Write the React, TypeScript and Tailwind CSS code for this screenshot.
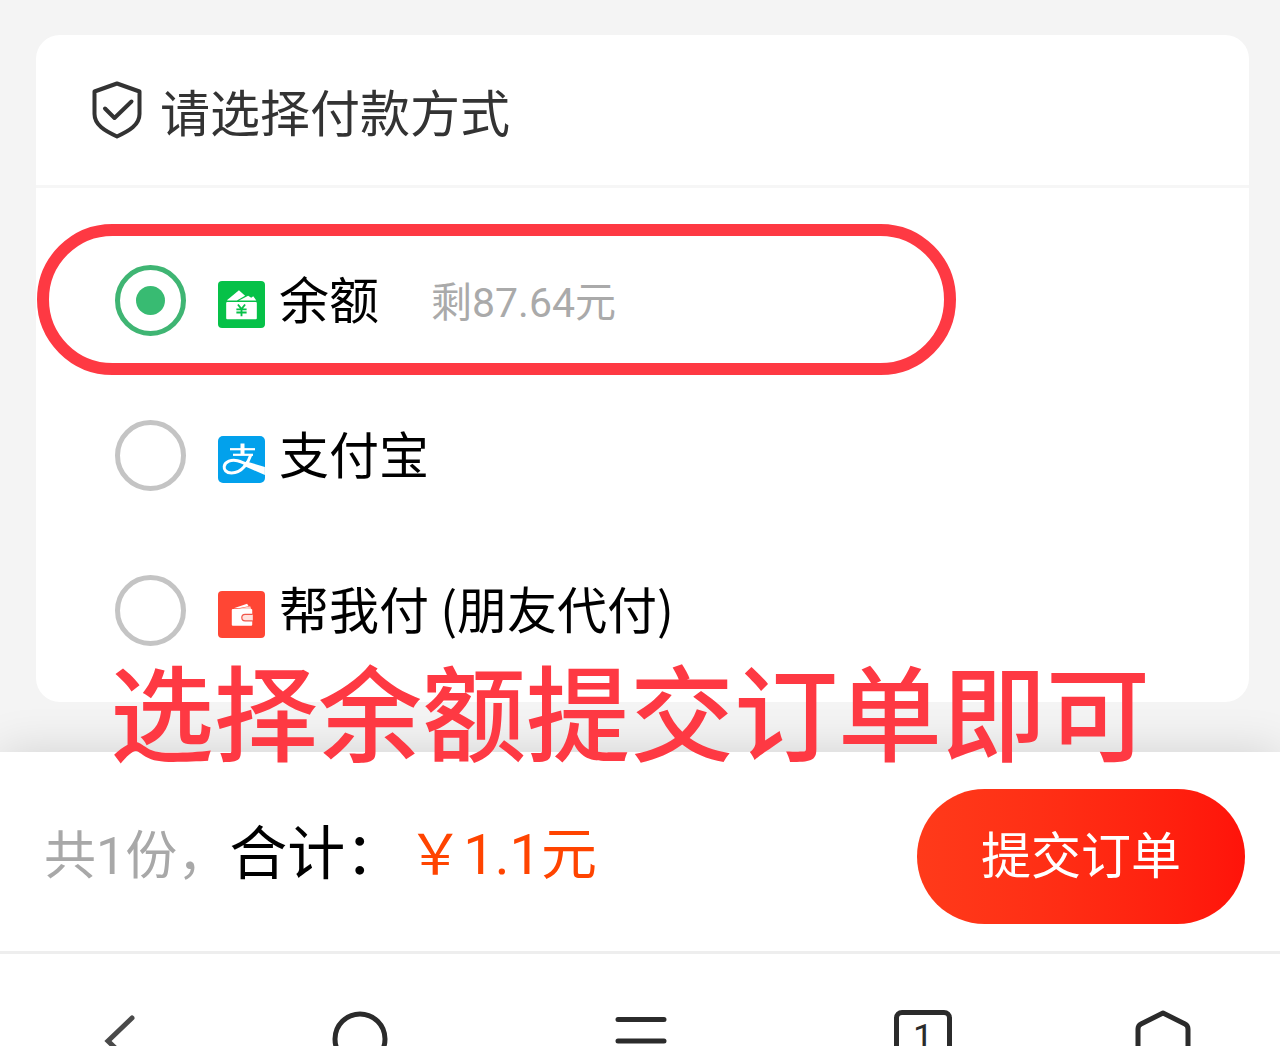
import type { ReactNode } from 'react';

interface PayMethod {
  id: string;
  name: string;
  balance?: string;
  icon: ReactNode;
}

function BalanceIcon() {
  return (
    <svg viewBox="0 0 46 46" className="size-[47px]" aria-hidden="true">
      <rect width="46" height="46" rx="4" fill="#06c148" />
      <path d="M9 18.5 L20.5 9 L26.5 14.5 L18.5 19 H9 Z" fill="#fff" />
      <path d="M20.5 19 L29.5 14.5 L32.5 16.5 L34.5 15 L37.5 19 Z" fill="#fff" />
      <rect x="8" y="20.5" width="30" height="17" rx="1" fill="#fff" />
      <path
        d="M19.5 23 L23 27.5 L26.5 23 M18 27.8 H28 M18 30.8 H28 M23 27.5 V34.5"
        fill="none"
        stroke="#06c148"
        strokeWidth="1.8"
      />
    </svg>
  );
}

function AlipayIcon() {
  return (
    <svg viewBox="0 0 47 47" className="size-[47px]" aria-hidden="true">
      <rect width="47" height="47" rx="5" fill="#02a1ec" />
      <path d="M46.9 31 V39 L33 33 L25 29.5 L28.5 25.5 Z" fill="#fff" />
      <g fill="none" stroke="#fff">
        <path d="M24.5 7.5 V18" strokeWidth="4" />
        <path d="M12 13.2 H37" strokeWidth="2.2" />
        <path d="M15 18.8 H35" strokeWidth="2.2" />
        <path
          d="M33 18.5 C30.5 26 24.5 37 13.5 37 C8 37 5.8 33.5 6.2 30.5 C7 25.5 13.5 23.3 19.5 24.8 C25 26.2 29 28.5 34 31"
          strokeWidth="3"
        />
      </g>
    </svg>
  );
}

function FriendPayIcon() {
  return (
    <svg viewBox="0 0 46 46" className="size-[47px]" aria-hidden="true">
      <rect width="46" height="46" rx="4" fill="#ff4634" />
      <path d="M15.5 17 L28.5 12.5 L30 15 L20 17 Z" fill="#fff" />
      <path d="M19 17.5 L31.5 15 L32.5 17.5 Z" fill="#ffd0ca" />
      <rect x="13.5" y="17.5" width="20" height="16.5" rx="1" fill="#fff" />
      <path
        d="M34 22.8 H26.5 A3.2 3.2 0 0 0 26.5 29.2 H34"
        fill="#ffe1dd"
        stroke="#f0564a"
        strokeWidth="1.2"
      />
    </svg>
  );
}

const METHODS: PayMethod[] = [
  { id: 'balance', name: '余额', balance: '剩87.64元', icon: <BalanceIcon /> },
  { id: 'alipay', name: '支付宝', icon: <AlipayIcon /> },
  { id: 'friend', name: '帮我付 (朋友代付)', icon: <FriendPayIcon /> },
];

function MethodRow({ method, selected }: { method: PayMethod; selected: boolean }) {
  return (
    <div className="relative flex h-[155px] items-center pl-[79px]">
      <input
        type="radio"
        id={method.id}
        name="pay-method"
        defaultChecked={selected}
        className="flex size-[71px] shrink-0 appearance-none items-center justify-center rounded-full border-5 border-[#c4c4c4] before:size-[29px] before:rounded-full checked:border-[#3fb573] checked:before:bg-[#38bb72]"
      />
      <label htmlFor={method.id} className="ml-8 flex items-center text-[50px] leading-[60px] text-black">
        <span className="mt-2">{method.icon}</span>
        <span className="mb-2 ml-3.5">{method.name}</span>
        {method.balance && (
          <span className="mt-1 ml-[52px] font-[Roboto,'Noto_Sans_CJK_SC',sans-serif] text-[41px] text-[#aaaaaa]">
            {method.balance}
          </span>
        )}
      </label>
      {/* Highlight ring around the chosen method */}
      {selected && (
        <div className="pointer-events-none absolute top-px left-px h-[151px] w-[919px] rounded-full border-12 border-[#fe3943]" />
      )}
    </div>
  );
}

export default function App() {
  return (
    <div className="flex h-screen flex-col overflow-hidden bg-[#f4f4f4] font-['Noto_Sans_CJK_SC',sans-serif]">
      <main className="pt-[35px] pr-[31px] pb-[50px] pl-9">
        <section className="rounded-3xl bg-white pb-[14px]">
          <header className="flex h-[153px] items-center gap-[18px] border-b-3 border-[#f6f6f6] pl-14 text-[#333333]">
            <svg viewBox="0 0 50 58" className="h-[58px] w-[50px]" fill="none" stroke="currentColor" aria-hidden="true">
              <path
                d="M25 2.5 L47.5 10.5 V33 C47.5 44 37 50 25 55.5 C13 50 2.5 44 2.5 33 V10.5 Z"
                strokeWidth="4"
                strokeLinejoin="round"
              />
              <path d="M13 27.5 L22.5 37 L39.5 20.5" strokeWidth="4" strokeLinecap="round" strokeLinejoin="round" />
            </svg>
            <h1 className="text-[50px] leading-[72px]">请选择付款方式</h1>
          </header>

          <div className="pt-[35px]">
            {METHODS.map((m, i) => (
              <MethodRow key={m.id} method={m} selected={i === 0} />
            ))}
          </div>
        </section>
      </main>

      {/* Order bar */}
      <div className="relative flex h-[202px] shrink-0 items-center justify-between border-b-3 border-[#eeeeee] bg-white pt-2.5 pr-[35px] pl-11 shadow-[0_0_44px_rgba(0,0,0,0.14)]">
        <p className="flex items-baseline pb-1 font-[Roboto,'Noto_Sans_CJK_SC',sans-serif]">
          <span className="text-[52px] text-[#a8a8a8]">共1份，</span>
          <span className="text-[58px] text-black">合计：</span>
          <span className="ml-1 text-[56px] text-[#ff4400]">￥1.1元</span>
        </p>
        <button
          type="button"
          className="h-[135px] w-[328px] rounded-full bg-linear-to-r from-[#ff3a1a] to-[#ff130a] pb-2 text-[50px] text-white"
        >
          提交订单
        </button>

        {/* Caption across the card edge */}
        <p className="pointer-events-none absolute -top-[95px] left-[110px] text-[104px] leading-[104px] font-medium whitespace-nowrap text-[#fe3943]">
          选择余额提交订单即可
        </p>
      </div>

      {/* Browser toolbar */}
      <nav className="relative grid shrink-0 grid-cols-[238fr_244fr_318fr_246fr_234fr] justify-items-center bg-white pt-14 pb-8 text-[#2b2b2b]">
        <button type="button" aria-label="返回">
          <svg viewBox="0 0 60 60" className="size-[60px]" fill="none" stroke="#4a4a4a" strokeWidth="5" strokeLinecap="round">
            <path d="M43 8 L19 31 L43 54" />
          </svg>
        </button>
        <button type="button" aria-label="主屏幕">
          <svg viewBox="0 0 60 60" className="size-[60px]" fill="none" stroke="currentColor" strokeWidth="5">
            <circle cx="30" cy="29" r="25" />
          </svg>
        </button>
        <button type="button" aria-label="菜单">
          <svg viewBox="0 0 60 60" className="size-[60px]" fill="none" stroke="currentColor" strokeWidth="5" strokeLinecap="round">
            <path d="M7 9.5 H53 M7 31 H53 M7 52.5 H53" />
          </svg>
        </button>
        <button type="button" aria-label="标签页" className="h-[60px] w-[58px]">
          <span className="flex size-full items-center justify-center rounded-lg border-5 pb-1 font-[Roboto,sans-serif] text-[36px] leading-none">
            1
          </span>
        </button>
        <button type="button" aria-label="主页">
          <svg viewBox="0 0 60 60" className="size-[60px]" fill="none" stroke="currentColor" strokeWidth="5" strokeLinejoin="round">
            <path d="M30 3 L52 14 Q55 15.5 55 19 V54 H5 V19 Q5 15.5 8 14 Z" />
          </svg>
        </button>
      </nav>
    </div>
  );
}
